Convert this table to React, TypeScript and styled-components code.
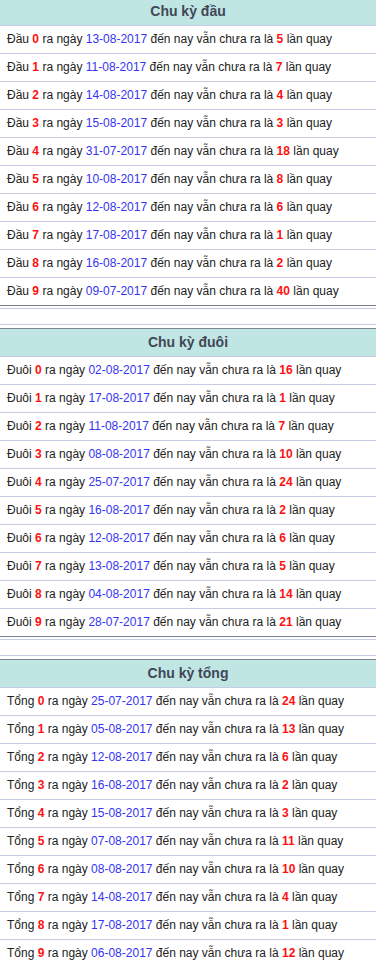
import styled, { createGlobalStyle } from "styled-components";

const GlobalStyle = createGlobalStyle`
  html, body {
    margin: 0;
    padding: 0;
    background: #fff;
    overflow: hidden;
  }
  body {
    font-family: "Liberation Sans", Arial, sans-serif;
  }
`;

const Page = styled.div`
  width: 376px;
  margin-top: -7px;
`;

// outer wrapper draws the thin light rules around each block
const Block = styled.div`
  border-top: 1px solid #c6cbe6;
  border-bottom: 1px solid #c6cbe6;
  padding: 3px 0 2px;
  margin-bottom: 15px;
`;

const Table = styled.div`
  border-top: 1px solid #7c8391;
  border-bottom: 1px solid #7c8391;
`;

const Head = styled.div`
  height: 27px;
  line-height: 27px;
  background: #c0e6e4;
  border-bottom: 1px solid #c6cbe6;
  text-align: center;
  font-size: 14px;
  font-weight: bold;
  color: #414757;
`;

const Row = styled.div`
  height: 27px;
  line-height: 27px;
  padding-left: 7px;
  font-size: 12px;
  color: #222;
  white-space: nowrap;
  & + & {
    border-top: 1px solid #c6cbe6;
  }
`;

const Num = styled.b`
  color: #ff1010;
`;

const Date = styled.span`
  color: #3434f2;
`;

type Item = { n: number; date: string; count: number };

const dau: Item[] = [
  { n: 0, date: "13-08-2017", count: 5 },
  { n: 1, date: "11-08-2017", count: 7 },
  { n: 2, date: "14-08-2017", count: 4 },
  { n: 3, date: "15-08-2017", count: 3 },
  { n: 4, date: "31-07-2017", count: 18 },
  { n: 5, date: "10-08-2017", count: 8 },
  { n: 6, date: "12-08-2017", count: 6 },
  { n: 7, date: "17-08-2017", count: 1 },
  { n: 8, date: "16-08-2017", count: 2 },
  { n: 9, date: "09-07-2017", count: 40 },
];

const duoi: Item[] = [
  { n: 0, date: "02-08-2017", count: 16 },
  { n: 1, date: "17-08-2017", count: 1 },
  { n: 2, date: "11-08-2017", count: 7 },
  { n: 3, date: "08-08-2017", count: 10 },
  { n: 4, date: "25-07-2017", count: 24 },
  { n: 5, date: "16-08-2017", count: 2 },
  { n: 6, date: "12-08-2017", count: 6 },
  { n: 7, date: "13-08-2017", count: 5 },
  { n: 8, date: "04-08-2017", count: 14 },
  { n: 9, date: "28-07-2017", count: 21 },
];

const tong: Item[] = [
  { n: 0, date: "25-07-2017", count: 24 },
  { n: 1, date: "05-08-2017", count: 13 },
  { n: 2, date: "12-08-2017", count: 6 },
  { n: 3, date: "16-08-2017", count: 2 },
  { n: 4, date: "15-08-2017", count: 3 },
  { n: 5, date: "07-08-2017", count: 11 },
  { n: 6, date: "08-08-2017", count: 10 },
  { n: 7, date: "14-08-2017", count: 4 },
  { n: 8, date: "17-08-2017", count: 1 },
  { n: 9, date: "06-08-2017", count: 12 },
];

function Cycle({ title, label, items }: { title: string; label: string; items: Item[] }) {
  return (
    <Block>
      <Table>
        <Head>{title}</Head>
        {items.map((i) => (
          <Row key={i.n}>
            {label} <Num>{i.n}</Num> ra ngày <Date>{i.date}</Date> đến nay vẫn chưa ra là{" "}
            <Num>{i.count}</Num> lần quay
          </Row>
        ))}
      </Table>
    </Block>
  );
}

export default function App() {
  return (
    <Page>
      <GlobalStyle />
      <Cycle title="Chu kỳ đầu" label="Đầu" items={dau} />
      <Cycle title="Chu kỳ đuôi" label="Đuôi" items={duoi} />
      <Cycle title="Chu kỳ tổng" label="Tổng" items={tong} />
    </Page>
  );
}
